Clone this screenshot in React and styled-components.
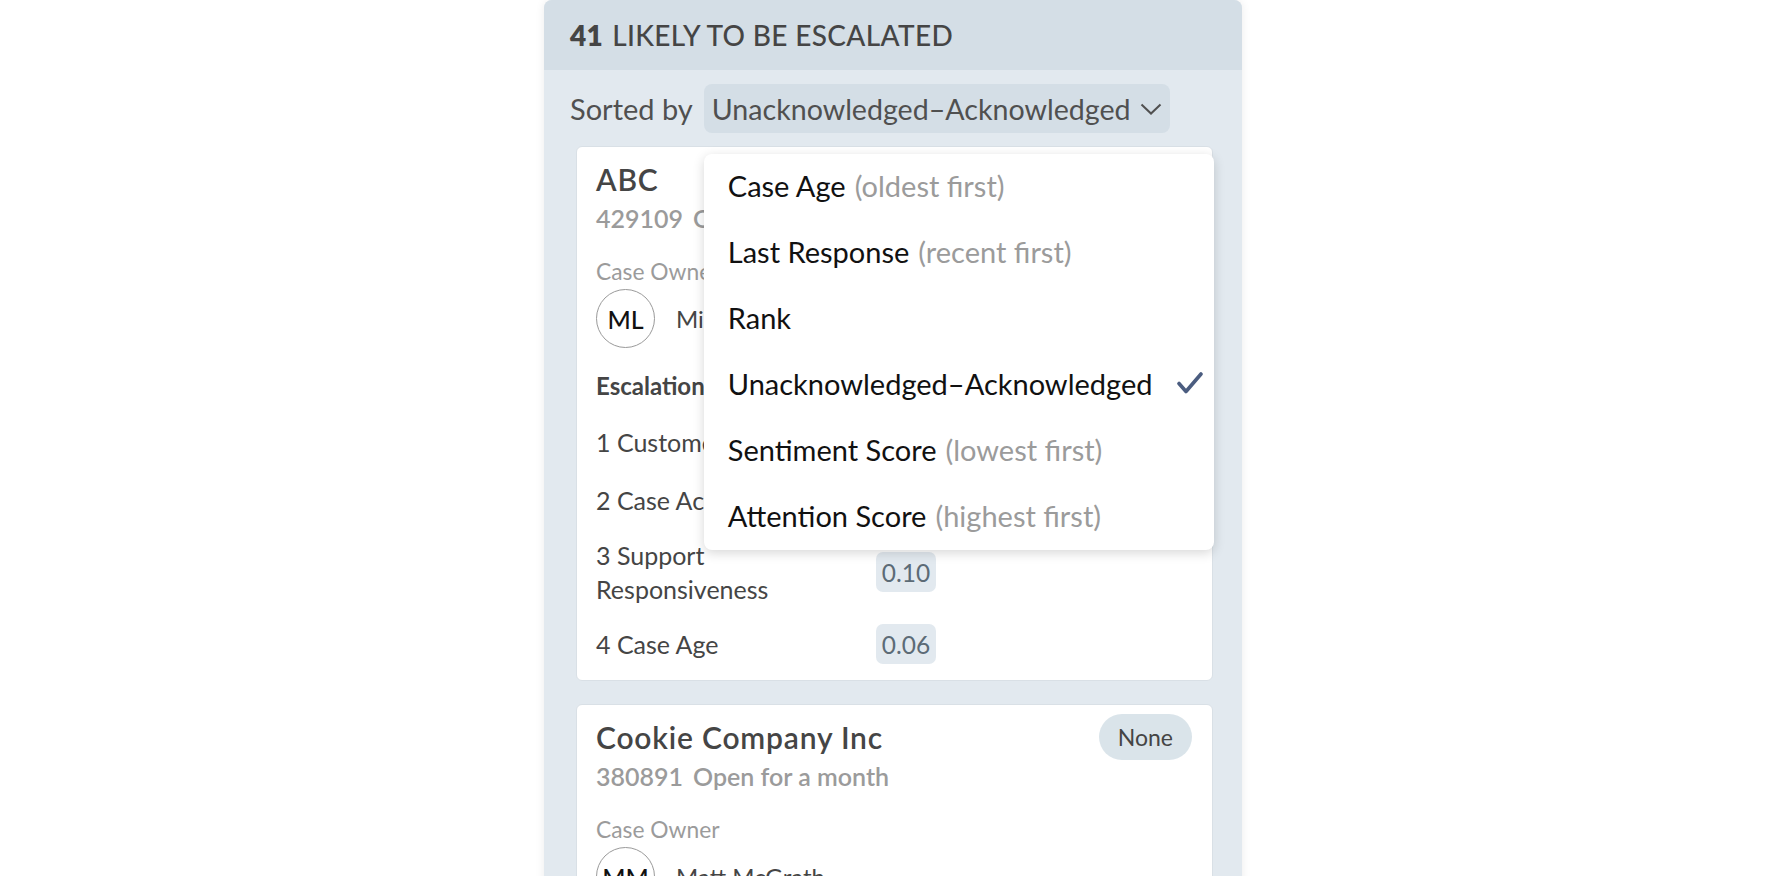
import { createGlobalStyle, styled } from 'styled-components';

const GlobalStyle = createGlobalStyle`
    html, body {
        margin: 0;
        padding: 0;
        background: #ffffff;
        overflow: hidden;
    }
    body {
        font-family: Lato, "Open Sans", sans-serif;
        -webkit-font-smoothing: antialiased;
    }
`;

const Panel = styled.section`
    width: 698px;
    margin: 0 auto;
    background: #e2e9ef;
    border-radius: 8px 8px 0 0;
    box-shadow: 0 0 10px rgba(0, 0, 0, 0.08);
    padding-bottom: 40px;
`;

const Header = styled.header`
    height: 70px;
    display: flex;
    align-items: center;
    padding-left: 26px;
    background: #d4dee6;
    border-radius: 8px 8px 0 0;
    color: #454545;
    font-size: 28px;
    letter-spacing: 0.35px;
`;

const Count = styled.b`
    font-weight: 800;
    margin-right: 9px;
`;

const Title = styled.span`
    font-weight: 500;
`;

const SortRow = styled.div`
    display: flex;
    align-items: center;
    gap: 11px;
    padding: 14px 0 13px 26px;
    font-size: 29px;
    color: #505050;
`;

const SelectWrap = styled.div`
    position: relative;
`;

const Select = styled.button`
    display: flex;
    align-items: center;
    gap: 9px;
    height: 49px;
    padding: 0 8px;
    border: none;
    border-radius: 8px;
    background: #d4dee6;
    font: inherit;
    font-size: 28.6px;
    color: #505050;
    cursor: pointer;
`;

const Menu = styled.ul`
    position: absolute;
    top: 70px;
    left: 0;
    width: 510px;
    margin: 0;
    padding: 0;
    list-style: none;
    background: #ffffff;
    border-radius: 8px;
    box-shadow: 0 3px 12px rgba(0, 0, 0, 0.16);
    z-index: 10;
`;

const MenuItem = styled.li`
    display: flex;
    align-items: center;
    justify-content: space-between;
    height: 66px;
    box-sizing: border-box;
    padding: 0 11px 4px 24px;
    font-size: 29px;
    color: #111111;
`;

const Hint = styled.span`
    color: #9b9b9b;
    margin-left: 9px;
`;

const Cards = styled.div`
    display: flex;
    flex-direction: column;
    gap: 23px;
    padding: 0 29px 0 32px;
`;

const Card = styled.article`
    background: #ffffff;
    border: 1px solid #d9e0e6;
    border-radius: 6px;
    padding: 15px 20px 16px 19px;
`;

const CardTop = styled.div`
    display: flex;
    align-items: center;
    justify-content: space-between;
`;

const Account = styled.h2`
    margin: 0;
    font-size: 30px;
    line-height: 34px;
    font-weight: 600;
    letter-spacing: 0.8px;
    color: #454545;
`;

const Badge = styled.span`
    margin: -6px 0;
    height: 46px;
    padding: 0 19px;
    display: flex;
    align-items: center;
    border-radius: 23px;
    background: #dae4ea;
    color: #454545;
    font-size: 23px;
`;

const Meta = styled.div`
    margin-top: 7px;
    font-size: 25px;
    line-height: 30px;
    font-weight: 600;
    color: #9b9b9b;
`;

const CaseId = styled.span`
    margin-right: 10px;
`;

const Label = styled.div`
    margin-top: 24px;
    font-size: 22.8px;
    line-height: 28px;
    color: #9b9b9b;
`;

const Owner = styled.div`
    display: flex;
    align-items: center;
    gap: 21px;
    margin-top: 4px;
    font-size: 24px;
    color: #454545;
`;

const Avatar = styled.span`
    width: 57px;
    height: 57px;
    border: 1.5px solid #9a9a9a;
    border-radius: 50%;
    display: flex;
    align-items: center;
    justify-content: center;
    font-size: 25px;
    font-weight: 500;
    color: #111111;
`;

const FactorTitle = styled.h3`
    margin: 22px 0 20px;
    font-size: 24px;
    line-height: 32px;
    font-weight: 700;
    color: #454545;
`;

const Factors = styled.div`
    display: grid;
    grid-template-columns: 262px 60px;
    column-gap: 18px;
    row-gap: 18px;
    align-items: center;
`;

const FactorName = styled.div`
    font-size: 25px;
    line-height: 34px;
    color: #454545;
`;

const Score = styled.span`
    height: 40px;
    display: flex;
    align-items: center;
    justify-content: center;
    border-radius: 7px;
    background: #e2e9ef;
    color: #5c6b76;
    font-size: 24.5px;
`;

const Chevron = () => (
    <svg width="22" height="12" viewBox="0 0 22 12">
        <polyline points="1.5,1.5 11,10.5 20.5,1.5" fill="none" stroke="#505050" strokeWidth="2" />
    </svg>
);

const Check = () => (
    <svg width="26" height="22" viewBox="0 0 26 22">
        <polyline points="2,11.5 9,19.5 24,2" fill="none" stroke="#4b5d80" strokeWidth="3.6" strokeLinecap="round" strokeLinejoin="round" />
    </svg>
);

const sortOptions = [
    { name: 'Case Age', hint: '(oldest first)' },
    { name: 'Last Response', hint: '(recent first)' },
    { name: 'Rank' },
    { name: 'Unacknowledged–Acknowledged', selected: true },
    { name: 'Sentiment Score', hint: '(lowest first)' },
    { name: 'Attention Score', hint: '(highest first)' },
];

const cases = [
    {
        account: 'ABC',
        id: '429109',
        age: 'Open for 2 months',
        badge: 'High',
        initials: 'ML',
        owner: 'Mike Lawson',
        factors: [
            ['1 Customer Sentiment', '0.42'],
            ['2 Case Activity', '0.31'],
            ['3 Support Responsiveness', '0.10'],
            ['4 Case Age', '0.06'],
        ],
    },
    {
        account: 'Cookie Company Inc',
        id: '380891',
        age: 'Open for a month',
        badge: 'None',
        initials: 'MM',
        owner: 'Matt McGrath',
        factors: [
            ['1 Case Activity', '0.38'],
            ['2 Customer Sentiment', '0.22'],
        ],
    },
];

const FactorRow = ({ name, value }) => (
    <>
        <FactorName>{name}</FactorName>
        <Score>{value}</Score>
    </>
);

const CaseCard = ({ item }) => (
    <Card>
        <CardTop>
            <Account>{item.account}</Account>
            <Badge>{item.badge}</Badge>
        </CardTop>
        <Meta>
            <CaseId>{item.id}</CaseId>
            {item.age}
        </Meta>
        <Label>Case Owner</Label>
        <Owner>
            <Avatar>{item.initials}</Avatar>
            {item.owner}
        </Owner>
        <FactorTitle>Escalation Factors</FactorTitle>
        <Factors>
            {item.factors.map(([name, value]) => (
                <FactorRow key={name} name={name} value={value} />
            ))}
        </Factors>
    </Card>
);

const App = () => {
    return (
        <>
            <GlobalStyle />
            <Panel>
                <Header>
                    <Count>41</Count>
                    <Title>LIKELY TO BE ESCALATED</Title>
                </Header>
                <SortRow>
                    Sorted by
                    <SelectWrap>
                        <Select>
                            Unacknowledged–Acknowledged
                            <Chevron />
                        </Select>
                        <Menu>
                            {sortOptions.map((opt) => (
                                <MenuItem key={opt.name}>
                                    <span>
                                        {opt.name}
                                        {opt.hint && <Hint>{opt.hint}</Hint>}
                                    </span>
                                    {opt.selected && <Check />}
                                </MenuItem>
                            ))}
                        </Menu>
                    </SelectWrap>
                </SortRow>
                <Cards>
                    {cases.map((c) => (
                        <CaseCard key={c.id} item={c} />
                    ))}
                </Cards>
            </Panel>
        </>
    );
};

export default App;
